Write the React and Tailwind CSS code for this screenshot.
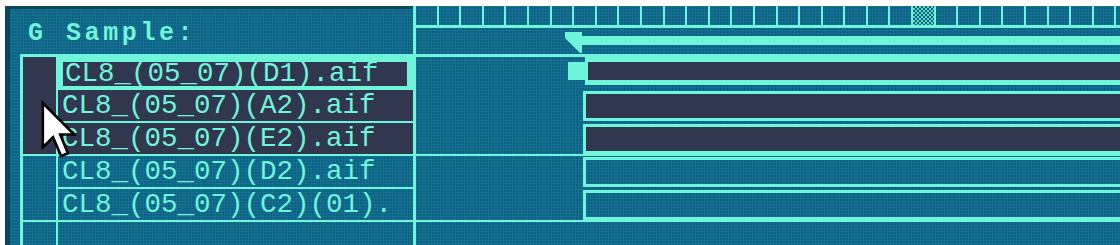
import React from 'react';

const files = [
  { name: 'CL8_(05_07)(D1).aif', selected: true, focused: true },
  { name: 'CL8_(05_07)(A2).aif', selected: true },
  { name: 'CL8_(05_07)(E2).aif', selected: true, groupEnd: true },
  { name: 'CL8_(05_07)(D2).aif' },
  { name: 'CL8_(05_07)(C2)(01).', groupEnd: true },
  { name: '', empty: true },
];

const RULER_CELLS = 31;

function Cursor() {
  return (
    <svg className="absolute left-[35px] top-[94px]" width="37" height="59" viewBox="0 0 13 20.5">
      <path d="M1 1 L1 16.5 L4.6 13 L7.4 19.6 L9.8 18.6 L7.1 12 L12 12 Z" fill="#ffffff" stroke="#000000" strokeWidth="0.9" strokeLinejoin="miter" />
    </svg>
  );
}

function SampleList() {
  return (
    <div className="w-[408px] shrink-0 flex flex-col overflow-hidden border-l-[5px] border-t-[3px] border-[#09465f]">
      {/* header */}
      <div className="h-[45px] shrink-0 flex items-center pt-[4px] text-[#6ff5d9] font-bold text-[25px] leading-none">
        <div className="w-[56px] pl-[18px]">G</div>
        <div className="tracking-[3.6px]">Sample:</div>
      </div>

      {/* table */}
      <div className="ml-[10px] shrink-0 flex flex-col border-t-[3px] border-l-[3px] border-[#6ff5d9]">
        {files.map((f, i) => (
          <div key={i} className="flex h-[33px] shrink-0">
            <div className={`w-[33px] border-b-2 ${f.groupEnd ? 'border-[#6ff5d9]' : 'border-transparent'} ${f.selected ? 'bg-[#30374f]' : ''}`} />
            {f.focused ? (
              <div className="flex-1 border-l-2 border-b-2 border-[#6ff5d9] bg-[#6ff5d9] pt-[5px] pb-[2px] pl-[5px] pr-[6px]">
                <div className="h-full bg-[#30374f] flex items-center pl-[2px] text-[27.5px] leading-none text-[#6ff5d9] whitespace-nowrap">
                  {f.name}
                </div>
              </div>
            ) : (
              <div className={`flex-1 border-l-2 border-b-2 border-[#6ff5d9] flex items-center pl-[4px] text-[27.5px] leading-none text-[#6ff5d9] whitespace-nowrap ${f.selected ? 'bg-[#30374f]' : ''}`}>
                {f.name}
              </div>
            )}
          </div>
        ))}
      </div>
    </div>
  );
}

function Timeline() {
  return (
    <div className="flex-1 min-w-0 flex flex-col border-l-[3px] border-[#6ff5d9] overflow-hidden">
      {/* ruler */}
      <div className="h-[22px] shrink-0 flex border-b-[3px] border-[#6ff5d9]">
        {Array.from({ length: RULER_CELLS }).map((_, i) => (
          <div key={i} className={`w-[22.6px] shrink-0 border-r-2 border-[#6ff5d9] ${i === 22 ? '[background-image:repeating-conic-gradient(#5fd8c4_0%_25%,#0a6486_0%_50%)] [background-size:4px_4px]' : ''}`} />
        ))}
      </div>

      {/* locator band */}
      <div className="h-[29px] shrink-0 flex items-start border-b-[3px] border-[#6ff5d9]">
        <div className="w-[149px] shrink-0" />
        <svg className="mt-[4px] shrink-0" width="17" height="21" viewBox="0 0 17 21">
          <polygon points="0,0 17,0 17,21 15,21 0,6" fill="#6ff5d9" />
        </svg>
        <div className="flex-1 mt-[8px] h-[9px] bg-[#6ff5d9]" />
      </div>

      {/* clip rows */}
      {files.map((f, i) => (
        <div key={i} className={`h-[33px] shrink-0 flex items-start ${f.groupEnd ? 'border-b-2 border-[#6ff5d9]' : ''}`}>
          {f.empty ? null : f.focused ? (
            <>
              <div className="w-[152px] shrink-0" />
              <div className="w-[17px] h-[18px] mt-[5px] bg-[#6ff5d9] shrink-0" />
              <div className="flex-1 h-[28px] border-y-[5px] border-l-[3px] border-[#6ff5d9] bg-[#30374f]" />
            </>
          ) : (
            <>
              <div className="w-[167px] shrink-0" />
              <div className={`flex-1 mt-[1px] h-[30px] border-y-[3px] border-l-[3px] border-[#6ff5d9] ${f.selected ? 'bg-[#30374f]' : ''}`} />
            </>
          )}
        </div>
      ))}
    </div>
  );
}

export default function App() {
  return (
    <div className="w-[1120px] h-[245px] bg-white pl-[5px] pt-[6px] overflow-hidden font-['Liberation_Mono','DejaVu_Sans_Mono',monospace]">
      <div className="relative flex h-full overflow-hidden bg-[#0a6486] [background-image:linear-gradient(90deg,rgba(255,255,255,0.05)_1px,transparent_1px),linear-gradient(rgba(255,255,255,0.05)_1px,transparent_1px)] [background-size:3px_3px]">
        <SampleList />
        <Timeline />
        <Cursor />
      </div>
    </div>
  );
}
